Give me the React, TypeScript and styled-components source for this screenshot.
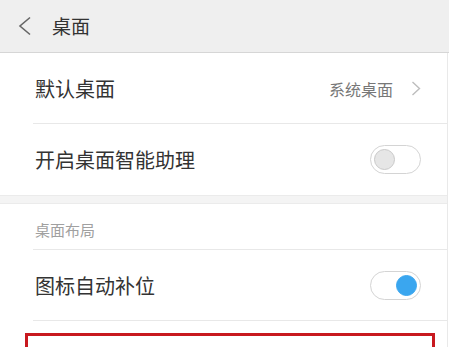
import React from "react";
import styled, { createGlobalStyle } from "styled-components";

const Global = createGlobalStyle`
  html, body { margin: 0; padding: 0; background: #ffffff; }
  body { font-family: "Noto Sans CJK SC", "Noto Sans", sans-serif; overflow: hidden; }
  * { box-sizing: border-box; }
`;

const Page = styled.div`
  width: 449px;
  height: 347px;
  overflow: hidden;
  background: #fff;
`;

const Header = styled.div`
  height: 53px;
  background: #efefef;
  border-bottom: 1px solid #d6d6d6;
  display: flex;
  align-items: center;
  padding-left: 18px;
  gap: 20px;
`;

const Title = styled.div`
  font-size: 19px;
  color: #333;
  line-height: 1;
  margin-top: -2px;
`;

const Body = styled.div`
  width: 448px;
  border-right: 1px solid #e9e9e9;
  height: 294px;
`;

const Row = styled.div<{ $last?: boolean }>`
  height: 71px;
  display: flex;
  align-items: center;
  justify-content: space-between;
  padding: 0 26px 0 35px;
  position: relative;
  &::after {
    content: "";
    display: ${(p) => (p.$last ? "none" : "block")};
    position: absolute;
    left: 33px;
    right: 0;
    bottom: 0;
    height: 1px;
    background: #e8e8e8;
  }
`;

const Label = styled.div`
  font-size: 20px;
  color: #333;
  line-height: 1;
`;

const Value = styled.div`
  display: flex;
  align-items: center;
  gap: 18px;
  font-size: 16px;
  color: #777;
`;

const Gap = styled.div`
  height: 9px;
  background: #f4f4f4;
  border-top: 1px solid #ebebeb;
  border-bottom: 1px solid #ebebeb;
`;

const SectionHeader = styled.div`
  height: 46px;
  display: flex;
  align-items: center;
  padding: 4px 0 0 35px;
  font-size: 15px;
  color: #a0a0a0;
  position: relative;
  &::after {
    content: "";
    position: absolute;
    left: 33px;
    right: 0;
    bottom: 0;
    height: 1px;
    background: #e8e8e8;
  }
`;

const Toggle = styled.div<{ $on?: boolean }>`
  width: 51px;
  height: 29px;
  border-radius: 15px;
  border: 1px solid #d4d4d4;
  background: #fff;
  display: flex;
  align-items: center;
  justify-content: ${(p) => (p.$on ? "flex-end" : "flex-start")};
  padding: 0 3px;
`;

const Knob = styled.div<{ $on?: boolean }>`
  width: 21px;
  height: 21px;
  border-radius: 50%;
  background: ${(p) => (p.$on ? "#3aa6ef" : "#e6e6e6")};
  border: 1px solid ${(p) => (p.$on ? "#3aa6ef" : "#c9c9c9")};
`;

const Highlight = styled.div`
  margin: 12px 12px 0 25px;
  border: 3px solid #c8191f;
  height: 80px;
`;

const HighlightRow = styled.div`
  display: flex;
  align-items: center;
  justify-content: space-between;
  padding: 6px 11px 0 7px;
  height: 62px;
`;

const BackIcon = () => (
  <svg width="14" height="20" viewBox="0 0 14 20">
    <polyline points="12,1.5 2,10 12,18.5" fill="none" stroke="#666" strokeWidth="1.6" />
  </svg>
);

const Chevron = () => (
  <svg width="10" height="15" viewBox="0 0 10 15">
    <polyline points="1.5,1 8.5,7.5 1.5,14" fill="none" stroke="#bdbdbd" strokeWidth="1.4" />
  </svg>
);

export default function App() {
  return (
    <Page>
      <Global />
      <Header>
        <BackIcon />
        <Title>桌面</Title>
      </Header>
      <Body>
        <Row>
          <Label>默认桌面</Label>
          <Value>
            系统桌面
            <Chevron />
          </Value>
        </Row>
        <Row $last>
          <Label>开启桌面智能助理</Label>
          <Toggle>
            <Knob />
          </Toggle>
        </Row>
        <Gap />
        <SectionHeader>桌面布局</SectionHeader>
        <Row>
          <Label>图标自动补位</Label>
          <Toggle $on>
            <Knob $on />
          </Toggle>
        </Row>
        <Highlight>
          <HighlightRow>
            <Label>锁定桌面布局</Label>
            <Toggle>
              <Knob />
            </Toggle>
          </HighlightRow>
        </Highlight>
      </Body>
    </Page>
  );
}
